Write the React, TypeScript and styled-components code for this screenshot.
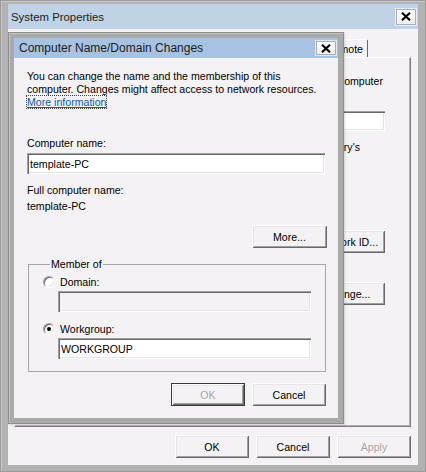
import React from 'react';
import styled, { createGlobalStyle, css } from 'styled-components';

const face = '#f4f2f5';

const GlobalStyle = createGlobalStyle`
  html, body {
    margin: 0;
    padding: 0;
  }
  body {
    width: 426px;
    height: 472px;
    overflow: hidden;
    background: #adadad;
    font-family: 'Liberation Sans', Arial, sans-serif;
    font-size: 10.6px;
    color: #000;
  }
  * {
    box-sizing: border-box;
  }
`;

const Window = styled.div`
  position: relative;
  width: 426px;
  height: 472px;
  display: flex;
  flex-direction: column;
  padding: 4px 8px 7px;
  background: #b2b2b2;
  box-shadow: inset 0 0 0 1px #9a9a9a, inset 2px 2px #c9c9c9;
`;

const TitleBar = styled.div<{ $dialog?: boolean }>`
  display: flex;
  align-items: center;
  justify-content: space-between;
  flex: none;
  height: ${(p) => (p.$dialog ? 20 : 25)}px;
  padding: ${(p) => (p.$dialog ? '0 2px 0 5px' : '0 2px 0 3px')};
  background: ${(p) => (p.$dialog ? '#a8c3e2' : '#bfd2e6')};
`;

const Title = styled.span<{ $size?: number }>`
  font-size: ${(p) => p.$size ?? 12}px;
  color: #1b1b1b;
  white-space: nowrap;
`;

const CloseButton = styled.button<{ $small?: boolean }>`
  display: grid;
  place-items: center;
  width: 20px;
  height: ${(p) => (p.$small ? 14 : 16)}px;
  padding: 0;
  border: 1px solid #aab0b8;
  background: linear-gradient(#fdfdfd, #eeeeee);
  box-shadow: 0 0 0 1px rgba(255, 255, 255, 0.6);
`;

const CloseGlyph = () => (
  <svg width="10" height="9" viewBox="0 0 10 9">
    <path d="M1 0.8 L9 8.2 M9 0.8 L1 8.2" stroke="#000" strokeWidth="2.2" fill="none" />
  </svg>
);

const Body = styled.div`
  flex: 1;
  display: flex;
  flex-direction: column;
  background: ${face};
  padding: 8px 7px 7px 6px;
`;

const TabStrip = styled.div`
  display: flex;
  justify-content: flex-end;
  align-items: flex-end;
  height: 20px;
  padding-right: 43px;
  overflow: hidden;
  flex: none;
`;

const Tab = styled.div`
  display: flex;
  align-items: center;
  height: 18px;
  padding: 0 4px 0 6px;
  white-space: nowrap;
  background: ${face};
  border: 1px solid;
  border-bottom: none;
  border-color: #fff #696969 transparent #fff;
  border-radius: 2px 2px 0 0;
`;

const Panel = styled.div`
  flex: 1;
  display: flex;
  flex-direction: column;
  padding: 17px 25px 0 12px;
  border: 1px solid;
  border-color: #fff #7c7c7c #7c7c7c #fff;
  box-shadow: inset -1px -1px #b4b4b4;
`;

const Line = styled.div<{ $inset?: number; $gap?: number }>`
  line-height: 13px;
  white-space: nowrap;
  text-align: right;
  padding-right: ${(p) => p.$inset ?? 0}px;
  margin-top: ${(p) => p.$gap ?? 0}px;
`;

const DescField = styled.input`
  display: block;
  height: 20px;
  margin-top: 23px;
  border: none;
  outline: none;
  background: #fff;
  box-shadow: inset 1px 1px #a0a0a0, inset 2px 2px #696969, inset -1px -1px #fff,
    inset -2px -2px #e3e3e3;
`;

const ActionRow = styled.div<{ $gap: number }>`
  display: flex;
  justify-content: flex-end;
  margin-top: ${(p) => p.$gap}px;
`;

const Footer = styled.div<{ $gap: number; $right?: number }>`
  display: flex;
  justify-content: flex-end;
  gap: 7px;
  flex: none;
  margin-top: ${(p) => p.$gap}px;
  margin-right: ${(p) => p.$right ?? 0}px;
`;

const Button = styled.button<{ $primary?: boolean; $wide?: boolean }>`
  flex: none;
  width: ${(p) => (p.$wide ? 75 : 74)}px;
  height: 23px;
  padding: 0;
  font: inherit;
  color: #000;
  background: ${face};
  border: none;
  box-shadow: inset 1px 1px #fff, inset -1px -1px #696969, inset 2px 2px #e6e6e6,
    inset -2px -2px #a0a0a0;
  ${(p) =>
    p.$primary &&
    css`
      box-shadow: inset 0 0 0 1px #3a3a3a, inset 2px 2px #fff, inset -2px -2px #696969,
        inset 3px 3px #e6e6e6, inset -3px -3px #a0a0a0;
    `}
  &:disabled {
    color: #a3a3a3;
    text-shadow: 1px 1px #fff;
  }
`;

const TextField = styled.input`
  display: block;
  height: 21px;
  padding: 0 3px;
  font: inherit;
  color: #000;
  background: #fff;
  border: none;
  outline: none;
  box-shadow: inset 1px 1px #a0a0a0, inset 2px 2px #696969, inset -1px -1px #fff,
    inset -2px -2px #e3e3e3;
  &:disabled {
    background: ${face};
  }
`;

const Dialog = styled.div`
  position: absolute;
  left: 8px;
  top: 32px;
  width: 336px;
  height: 392px;
  display: flex;
  flex-direction: column;
  padding: 5px;
  background: #aaaaaa;
  border: 1px solid #8e8e8e;
  box-shadow: inset 1px 1px #c4c4c4, 1px 1px 2px rgba(0, 0, 0, 0.15);
`;

const DialogBody = styled.div`
  flex: 1;
  display: flex;
  flex-direction: column;
  background: ${face};
  padding: 12px 11px 0 13px;
`;

const Intro = styled.p`
  margin: 0;
  line-height: 13px;
  white-space: nowrap;
`;

const Link = styled.a`
  color: #0a5bb5;
  text-decoration: underline;
  outline: 1px dotted #444;
  outline-offset: 0;
`;

const Label = styled.div<{ $gap: number }>`
  line-height: 13px;
  margin-top: ${(p) => p.$gap}px;
`;

const NameField = styled(TextField)`
  margin: 3px 2px 0 0;
`;

const FullName = styled.div`
  margin-top: 8px;
  line-height: 16px;
`;

const MoreButton = styled(Button)`
  align-self: flex-end;
  margin-top: 11px;
`;

const GroupBox = styled.fieldset`
  margin: 10px 1px 0;
  padding: 4px 14px 12px;
  min-width: 0;
  border: 1px solid #a6a6a6;
`;

const Legend = styled.legend`
  margin-left: 7px;
  padding: 0 1px;
  line-height: 13px;
`;

const RadioRow = styled.label<{ $gap?: number }>`
  display: flex;
  align-items: center;
  gap: 5px;
  height: 13px;
  margin-top: ${(p) => p.$gap ?? 0}px;
`;

const Radio = styled.span<{ $checked?: boolean }>`
  position: relative;
  flex: none;
  width: 12px;
  height: 12px;
  border-radius: 50%;
  background: #fff;
  border: 1px solid;
  border-color: #a0a0a0 #fff #fff #a0a0a0;
  box-shadow: inset 1px 1px #696969, inset -1px -1px #e3e3e3;
  ${(p) =>
    p.$checked &&
    css`
      &::after {
        content: '';
        position: absolute;
        left: 3px;
        top: 3px;
        width: 4px;
        height: 4px;
        border-radius: 50%;
        background: #000;
      }
    `}
`;

const GroupField = styled(TextField)`
  width: 253px;
  margin: 3px 0 0 15px;
`;

export default function App() {
  return (
    <>
      <GlobalStyle />
      <Window>
        <TitleBar>
          <Title $size={11.4}>System Properties</Title>
          <CloseButton aria-label="Close">
            <CloseGlyph />
          </CloseButton>
        </TitleBar>
        <Body>
          <TabStrip>
            <Tab>Remote</Tab>
          </TabStrip>
          {/* the part of the Computer Name tab left uncovered by the dialog */}
          <Panel>
            <Line $inset={2}>computer</Line>
            <DescField />
            <Line $inset={25} $gap={9.5}>
              Mary's
            </Line>
            <ActionRow $gap={76.5}>
              <Button $wide>Network ID...</Button>
            </ActionRow>
            <ActionRow $gap={29}>
              <Button $wide>Change...</Button>
            </ActionRow>
          </Panel>
          <Footer $gap={8}>
            <Button>OK</Button>
            <Button>Cancel</Button>
            <Button disabled>Apply</Button>
          </Footer>
        </Body>

        <Dialog>
          <TitleBar $dialog>
            <Title>Computer Name/Domain Changes</Title>
            <CloseButton $small aria-label="Close">
              <CloseGlyph />
            </CloseButton>
          </TitleBar>
          <DialogBody>
            <Intro>
              You can change the name and the membership of this
              <br />
              computer. Changes might affect access to network resources.
              <br />
              <Link href="#">More information</Link>
            </Intro>
            <Label $gap={28}>Computer name:</Label>
            <NameField defaultValue="template-PC" />
            <FullName>
              Full computer name:
              <br />
              template-PC
            </FullName>
            <MoreButton $wide>More...</MoreButton>
            <GroupBox>
              <Legend>Member of</Legend>
              <RadioRow>
                <Radio />
                Domain:
              </RadioRow>
              <GroupField disabled />
              <RadioRow $gap={10}>
                <Radio $checked />
                Workgroup:
              </RadioRow>
              <GroupField defaultValue="WORKGROUP" />
            </GroupBox>
            <Footer $gap={11} $right={1}>
              <Button $primary disabled>
                OK
              </Button>
              <Button>Cancel</Button>
            </Footer>
          </DialogBody>
        </Dialog>
      </Window>
    </>
  );
}
